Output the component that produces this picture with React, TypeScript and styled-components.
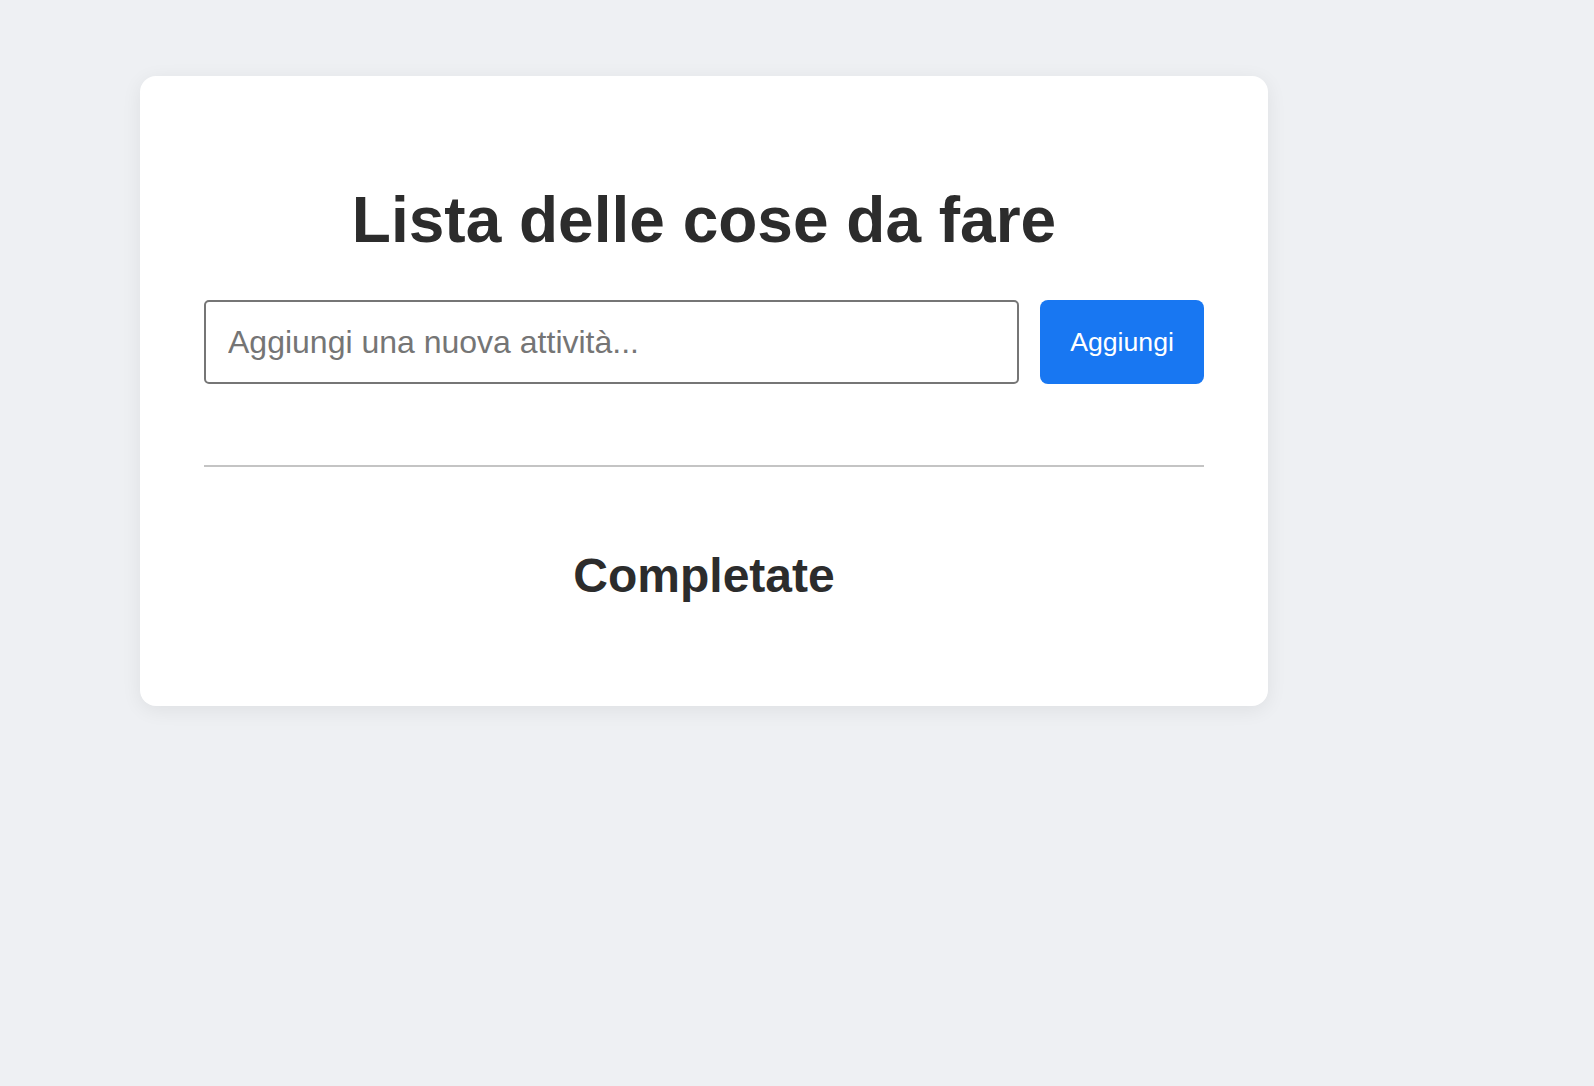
import React from "react";
import styled, { createGlobalStyle } from "styled-components";

const GlobalStyle = createGlobalStyle`
  html, body {
    margin: 0;
    padding: 0;
    background: #eef0f3;
    font-family: "Liberation Sans", Arial, Helvetica, sans-serif;
  }
  * { box-sizing: border-box; }
`;

const Page = styled.div`
  min-height: 1086px;
  padding: 76px 140px;
  background: #eef0f3;
`;

const Card = styled.div`
  width: 1128px;
  background: #ffffff;
  border-radius: 16px;
  box-shadow: 0 4px 20px rgba(0, 0, 0, 0.07);
  padding: 0 64px;
  display: flex;
  flex-direction: column;
`;

const Title = styled.h1`
  margin: 107px 0 43px;
  font-size: 64px;
  line-height: 74px;
  font-weight: 700;
  color: #2c2c2c;
  text-align: center;
`;

const Form = styled.form`
  display: flex;
  gap: 21px;
  margin: 0;
`;

const TaskInput = styled.input`
  flex: 1;
  height: 84px;
  padding: 0 22px;
  border: 2px solid #767676;
  border-radius: 5px;
  font-family: "Liberation Sans", Arial, Helvetica, sans-serif;
  font-size: 32px;
  color: #222;
  background: #fff;
  outline: none;
  &::placeholder {
    color: #757575;
  }
`;

const AddButton = styled.button`
  width: 164px;
  height: 84px;
  border: none;
  border-radius: 8px;
  background: #1877f2;
  color: #ffffff;
  font-family: "Liberation Sans", Arial, Helvetica, sans-serif;
  font-size: 26.67px;
  cursor: pointer;
`;

const Divider = styled.hr`
  margin: 81px 0 0;
  border: none;
  height: 2px;
  background: #c4c4c4;
`;

const SectionTitle = styled.h2`
  margin: 81px 0 103px;
  font-size: 48px;
  line-height: 55px;
  font-weight: 700;
  color: #2c2c2c;
  text-align: center;
`;

export default function App() {
  return (
    <>
      <GlobalStyle />
      <Page>
        <Card>
          <Title>Lista delle cose da fare</Title>
          <Form onSubmit={(e) => e.preventDefault()}>
            <TaskInput type="text" placeholder="Aggiungi una nuova attività..." />
            <AddButton type="submit">Aggiungi</AddButton>
          </Form>
          <Divider />
          <SectionTitle>Completate</SectionTitle>
        </Card>
      </Page>
    </>
  );
}
